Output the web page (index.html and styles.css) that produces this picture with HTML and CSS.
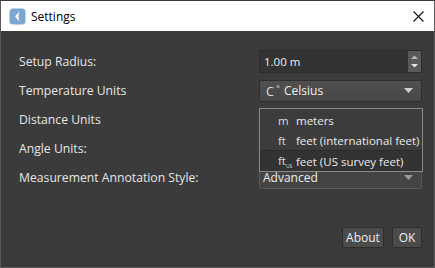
FILE: index.html
```html
<!DOCTYPE html>
<html>
<head>
<meta charset="utf-8">
<link rel="stylesheet" href="styles.css">
</head>
<body>
<div class="window">
  <div class="titlebar">
    <svg class="app-icon" width="17" height="17" viewBox="0 0 17 17">
      <rect x="0.5" y="0.5" width="16" height="16" rx="3.5" fill="#7aa6cf"/>
      <path d="M10.5 3.2 L6 8.5 L10.5 13.8 Q8.6 8.5 10.5 3.2 Z" fill="#ffffff"/>
    </svg>
    <span class="title">Settings</span>
    <svg class="close" width="11" height="11" viewBox="0 0 11 11">
      <path d="M0.5 0.5 L10.5 10.5 M10.5 0.5 L0.5 10.5" stroke="#111" stroke-width="1.1"/>
    </svg>
  </div>
  <div class="content">
    <div class="form">
      <div class="label">Setup Radius:</div>
      <div class="spinbox">
        <span class="spin-text">1.00 m</span>
        <span class="spin-btns">
          <svg width="13" height="21" viewBox="0 0 13 21">
            <path d="M3 8 L6.5 4.5 L10 8 Z" fill="#b9b9b9"/>
            <path d="M3 13 L6.5 16.5 L10 13 Z" fill="#e6e6e6"/>
          </svg>
        </span>
      </div>
      <div class="label">Temperature Units</div>
      <div class="combo">
        <span class="combo-text"><span class="unit">C<sup class="deg">°</sup></span>Celsius</span>
        <svg class="arrow" width="9" height="5" viewBox="0 0 9 5"><path d="M0 0 L9 0 L4.5 5 Z" fill="#d0d0d0"/></svg>
      </div>
      <div class="label">Distance Units</div>
      <div class="combo"></div>
      <div class="label">Angle Units:</div>
      <div class="combo"></div>
      <div class="label">Measurement Annotation Style:</div>
      <div class="combo combo-plain">
        <span class="combo-text">Advanced</span>
        <svg class="arrow" width="9" height="5" viewBox="0 0 9 5"><path d="M0 0 L9 0 L4.5 5 Z" fill="#9a9a9a"/></svg>
      </div>
    </div>
    <div class="buttons">
      <button class="btn btn-about">About</button>
      <button class="btn btn-ok">OK</button>
    </div>
    <div class="popup">
      <div class="item"><span class="sym">m</span><span>meters</span></div>
      <div class="item"><span class="sym">ft</span><span>feet (international feet)</span></div>
      <div class="item selected"><span class="sym">ft<sub class="us">US</sub></span><span>feet (US survey feet)</span></div>
    </div>
  </div>
</div>
</body>
</html>
```
FILE: styles.css
```css
html, body {
  margin: 0;
  padding: 0;
  background: #3b3b3b;
}
.window {
  width: 435px;
  height: 268px;
  box-sizing: border-box;
  border: 1px solid #5a5a5a;
  border-top-color: #3a3a3a;
  display: flex;
  flex-direction: column;
  font-family: "Open Sans", "Noto Sans", sans-serif;
  overflow: hidden;
}
.titlebar {
  height: 30px;
  background: #ffffff;
  display: flex;
  align-items: center;
  padding-left: 8px;
  padding-right: 10px;
  flex: none;
}
.app-icon { flex: none; }
.title {
  margin-left: 5px;
  font-size: 12px;
  color: #000;
  flex: 1;
}
.close { flex: none; }
.content {
  position: relative;
  flex: 1;
  display: flex;
  flex-direction: column;
  padding: 19px 12px 19px 18px;
  background: #3b3b3b;
}
.form {
  display: grid;
  grid-template-columns: 240px 163px;
  grid-auto-rows: 23px;
  row-gap: 6px;
  align-items: center;
}
.label {
  color: #e6e6e6;
  font-size: 12.2px;
  white-space: nowrap;
}
.spinbox {
  height: 23px;
  box-sizing: border-box;
  border: 1px solid #2c2c2c;
  background: #333333;
  display: flex;
  align-items: center;
  justify-content: space-between;
  padding-left: 4px;
}
.spin-text { color: #eeeeee; font-size: 11.5px; }
.spin-btns {
  width: 13px;
  height: 21px;
  background: #5a5a5a;
  display: flex;
}
.combo {
  height: 22px;
  box-sizing: border-box;
  border: 1px solid #2e2e2e;
  border-radius: 2px;
  background: linear-gradient(#505050, #474747);
  display: flex;
  align-items: center;
  justify-content: space-between;
  padding: 0 6px;
  white-space: nowrap;
}
.combo-plain {
  background: #444444;
  border-color: #595959;
  padding-left: 3px;
}
.combo-text { color: #eeeeee; font-size: 12px; display: flex; align-items: center; }
.unit { width: 18px; display: inline-block; font-size: 12.5px; color: #e0e0e0; }
.deg { font-size: 9px; vertical-align: 4px; margin-left: 2px; }
.arrow { flex: none; margin-right: 2px; }
.buttons {
  margin-top: auto;
  display: flex;
  justify-content: flex-end;
  gap: 8px;
}
.btn {
  height: 21px;
  box-sizing: border-box;
  border: 1px solid #2d2d2d;
  border-radius: 2px;
  background: #4b4b4b;
  color: #efefef;
  font-family: "Open Sans", "Noto Sans", sans-serif;
  font-size: 12px;
  padding: 0;
}
.btn-about { width: 42px; }
.btn-ok { width: 30px; }
.popup {
  position: absolute;
  left: 258px;
  top: 77px;
  width: 164px;
  height: 64px;
  box-sizing: border-box;
  border: 1px solid #8a8a8a;
  background: #3c3c3c;
  display: flex;
  flex-direction: column;
  padding-top: 1px;
}
.item {
  height: 20.5px;
  display: flex;
  align-items: center;
  color: #eaeaea;
  font-size: 11.5px;
  white-space: nowrap;
}
.item .sym {
  width: 36px;
  padding-left: 18px;
  box-sizing: border-box;
  flex: none;
  color: #dcdcdc;
}
.item.selected {
  background: #333333;
  border-top: 1px solid #2a2a2a;
}
.us { font-size: 5px; vertical-align: -3px; }
```
